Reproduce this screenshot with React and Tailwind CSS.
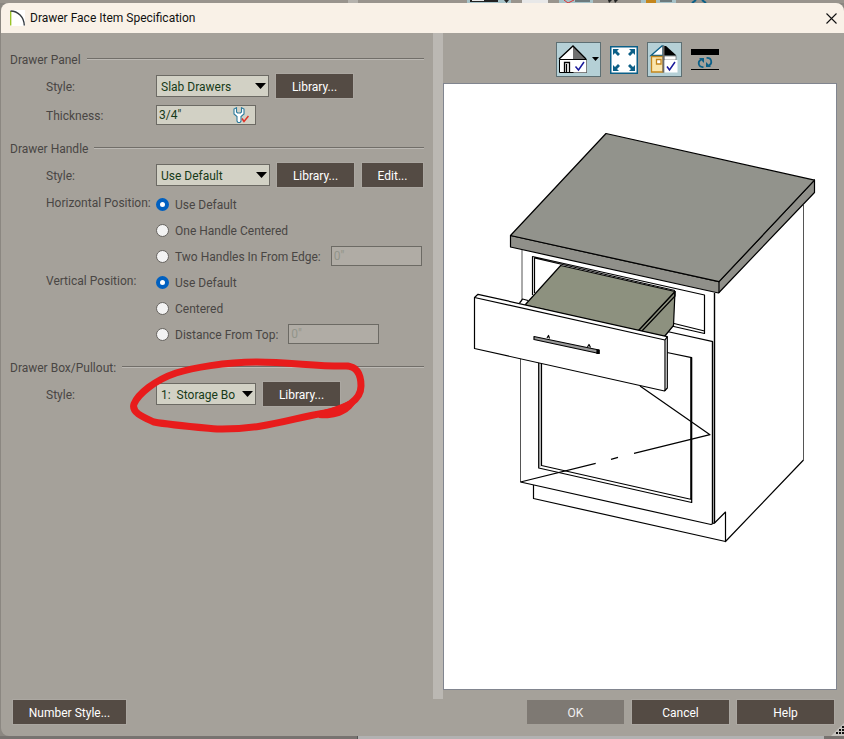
import React, { useState } from 'react';

const BUTTON = 'h-6 shrink-0 pt-px bg-[#544b44] text-white outline outline-[#aba7a1]';
const FIELD = 'h-5 border border-[#6c6a64] px-[2px]';

const Group = ({ title, className = '', children }) => (
    <section className={className}>
        <div className="flex items-center gap-[6px] h-5">
            <h2>{title}</h2>
            <div className="flex-1 h-[2px] mb-[2px] bg-[#716e69] border-b border-[#bcb9b4]"></div>
        </div>
        <div className="pl-9">{children}</div>
    </section>
);

const Select = ({ id, value, className }) => (
    <div className={`relative shrink-0 ${className}`}>
        <select
            id={id}
            defaultValue={value}
            className="block w-full h-[22px] pl-1 pr-5 pt-px appearance-none rounded-none bg-[#d2d1c5] border border-[#6c6a64] text-[#163a18]"
        >
            <option>{value}</option>
        </select>
        <svg className="absolute right-[3px] top-2 pointer-events-none" width="11" height="6" viewBox="0 0 11 6">
            <path d="M0 0H11L5.5 6Z" fill="#000" />
        </svg>
    </div>
);

const Radio = ({ name, value, label, current, onChange, children }) => (
    <div className="flex items-center h-[26px]">
        <label className="flex items-center gap-[6px] whitespace-nowrap">
            <input
                type="radio"
                name={name}
                checked={current === value}
                onChange={() => onChange(value)}
                className="appearance-none size-[13px] rounded-full bg-[#f3f3f3] border border-[#66635f] checked:bg-white checked:border-4 checked:border-[#0060c0]"
            />
            <span className="pt-px">{label}</span>
        </label>
        {children}
    </div>
);

const HouseIcon = () => (
    <svg width="43" height="33" viewBox="1 1 43 33">
        <path d="M4 17L17 4V17Z" fill="#fff" />
        <path d="M17 4L30 17H17Z" fill="#707070" />
        <path d="M3.500 17.500H30.500V30.500H3.500Z" fill="#fff" stroke="#000" />
        <path d="M3 17L17 4L30 17" fill="none" stroke="#000" strokeWidth="1.3" />
        <path d="M8.500 30V20.500H13.500V30M10.500 30V22" fill="none" stroke="#000" strokeWidth="1.3" />
        <path d="M17.500 18H30.500V30.500H17.500Z" fill="#fff" />
        <path d="M19.500 24.500L22.500 28L28 20" fill="none" stroke="#1a1a9c" strokeWidth="1.5" />
        <path d="M36 15H43L39.500 19Z" fill="#000" />
    </svg>
);

const FillWindowIcon = () => (
    <svg width="28" height="28" viewBox="0 0 28 28">
        <rect x=".75" y=".75" width="26.500" height="26.500" fill="#fff" stroke="#0b5f87" strokeWidth="1.5" />
        <g fill="#0b5f87">
            <path d="M3 3H9L7 5L10 8L8 10L5 7L3 9Z" />
            <path d="M25 3H19L21 5L18 8L20 10L23 7L25 9Z" />
            <path d="M3 25H9L7 23L10 20L8 18L5 21L3 19Z" />
            <path d="M25 25H19L21 23L18 20L20 18L23 21L25 19Z" />
        </g>
    </svg>
);

const ColorHouseIcon = () => (
    <svg width="33" height="33" viewBox="1 1 33 33">
        <path d="M4 13.500L15 4H16V13.500Z" fill="#fff" stroke="#0b5f87" strokeWidth="1.3" />
        <path d="M17 4H19L29.500 13.500H17Z" fill="#000" />
        <path d="M17 14H29V18H17Z" fill="#fff" stroke="#333" strokeWidth=".5" />
        <path d="M4.500 14.500H16V30H4.500Z" fill="#fbe6ad" stroke="#c4861d" strokeWidth="1.3" />
        <path d="M9.500 17.500H14V22H9.500Z" fill="#fff" stroke="#c4861d" strokeWidth="1.3" />
        <path d="M15.500 3.500H17.500V30.500H15.500Z" fill="#6c6c6c" />
        <path d="M17.500 18H30.500V30.500H17.500Z" fill="#fff" />
        <path d="M20 24.500L22.500 28L28 20" fill="none" stroke="#1a1a9c" strokeWidth="1.5" />
    </svg>
);

const RotateIcon = () => (
    <svg width="28" height="22" viewBox="0 0 28 22">
        <path d="M0 0H28V6H0Z" fill="#000" />
        <path d="M0 20H28V21H0Z" fill="#000" />
        <path d="M12.500 18C7.500 18.500 6 13 10 10.500M15.500 9C20.500 8.500 22 14 18 16.500" fill="none" stroke="#0b5f87" strokeWidth="1.7" />
        <path d="M8 9H13V14Z" fill="#0b5f87" />
        <path d="M15 13V18H20Z" fill="#0b5f87" />
    </svg>
);

const WrenchIcon = () => (
    <svg width="16" height="16" viewBox="0 0 16 16">
        <path
            d="M3.500 .7L1 2V7L4 9.500V14L5 15.500H7L8 14V9.500L11 7V2L8.500 .7V5L7.500 6H4.500L3.500 5Z"
            fill="#fff" stroke="#2b7a9d" strokeWidth="1.1"
        />
        <path d="M9 11.500L11 14.500L15.500 9" fill="none" stroke="#e03127" strokeWidth="1.5" />
    </svg>
);

const Cabinet = () => (
    <svg className="w-full h-full" viewBox="444 84 392 605" fill="none" stroke="#000" strokeWidth="1.2" strokeLinejoin="round">
        {/* Carcass */}
        <path d="M803.500 460L725.500 541.500V512L714 523.500" />
        <path d="M803.500 205V460M522 250V300M520.500 358V482" stroke="#555" strokeWidth="1" />
        <path d="M725.500 541.500L533.500 498.500V485" />
        <path d="M520.500 482L711 524.500L714 523" />
        <path d="M714.500 293V523M712.500 341.500V523.500" strokeWidth="1.4" />

        {/* Drawer opening */}
        <path d="M532.500 295V256.500L704.500 295V333.500L665 324.500M534.500 293V258L675 290.500M670 322.500L704.500 331" />
        <path d="M665 331L713 341.700" />
        <path d="M521 301L522.500 299L528 300.500M519.500 303L522 300" />

        {/* Door panel */}
        <path d="M539 362H541.500V466L539 468Z" fill="#ccc" stroke="none" />
        <path d="M538.700 362V468L691.700 502.500V357.700L667 352.500M541.500 362V465.500L691.700 499.500M690.800 358V499" />
        <path d="M640 386L710 434.700L634 453.300M618 457.300L611 459.300M595.700 463.300L520.500 482" />

        {/* Drawer box */}
        <path d="M675 291.500L673.500 325.500L664 337L638 331Z" fill="#8d917f" />
        <path d="M560.700 265.500L675 291.500L638 331L525 305Z" fill="#8d917f" />
        <path d="M675 291.500V296L641 332" />

        {/* Drawer front */}
        <path d="M474.500 297.500L478 294.300L667.300 336.700V388L664.500 391L474.500 348.500Z" fill="#fff" />
        <path d="M474.500 297.500L665 340L667.300 336.700M665 340V391" />
        <path d="M534 336.500L599 350V353.500L534 339.500Z" fill="#999" />
        <path d="M547 338L548.500 335.500L549.500 338.500M587.500 347L589 344.500L590.500 347.500" />
        <path d="M597 350V353.500H599V350Z" fill="#000" />

        {/* Countertop */}
        <path d="M510.500 235.500L719 281.700L814.500 180V192.500L718.500 293L510.500 247Z" fill="#90908a" />
        <path d="M606 133.500L814.500 180.200L719 281.700L510.500 235.500Z" fill="#92938c" />
        <path d="M719 281.700V293" />
    </svg>
);

const Markup = () => (
    <svg className="absolute left-[120px] -top-2 pointer-events-none" width="246" height="85" viewBox="130 350 246 85">
        <path
            d="M348 366C320 367 290 362 257 362C225 362 192 368 176 373C155 380 138 394 134 404C131 413 145 418 154 422C170 425 195 427 217 429C265 430 295 417 325 413C346 409 361 400 361 386C361 373 356 366 346 366"
            fill="none" stroke="#e81c1c" strokeWidth="7" strokeLinecap="round" strokeLinejoin="round"
        />
        <path d="M315 412C335 408 352 400 358 396C355 410 341 420 319 418Z" fill="#e81c1c" />
    </svg>
);

export default function App() {
    const [horizontal, setHorizontal] = useState('default');
    const [vertical, setVertical] = useState('default');

    return (
        <div className="min-h-screen flex flex-col bg-[#8b8781] font-['Roboto','Open_Sans',sans-serif] text-xs text-[#494644]">
            {/* Application toolbar peeking out above the dialog */}
            <svg className="block w-full h-[3px]" viewBox="0 0 844 3" preserveAspectRatio="none">
                <path d="M0 0H844V3H0Z" fill="#99948d" />
                <path d="M348 0H358V3H348Z" fill="#b5b2ad" />
                <path d="M467 0H511V3H467ZM559 0H593V3H559ZM641 0H676V3H641Z" fill="#a7c2c8" />
                <path d="M470 0H498V2H470ZM504 0H509L506.500 3ZM608 0H612L609 3ZM614 0H618L615 3Z" fill="#222" />
                <path d="M472 0H484V1H472ZM522 0H548V3H522Z" fill="#e8e8e8" />
                <path d="M564 0L568 3L574 0" stroke="#d33" fill="none" />
                <path d="M575 1H590M660 1H672" stroke="#333" />
                <path d="M646 0H656V3H646Z" fill="#c4861d" />
                <path d="M692 3L696 0M702 0L706 3" stroke="#0b5f87" strokeWidth="2" />
            </svg>

            <main className="relative flex-1 flex flex-col ml-px bg-[#a5a19a] rounded-t-lg rounded-bl-lg overflow-hidden">
                <header className="flex items-center h-[30px] pl-[9px] pr-[7px] bg-[#f9f1e7] text-[#111]">
                    <svg width="16" height="16" viewBox="0 0 16 16">
                        <path d="M0 0H15V16H0Z" fill="#fff" />
                        <path d="M.7 1V15.500" stroke="#95c11f" strokeWidth="1.3" />
                        <path d="M.5 1C8 1 14 7 14.300 15.500" fill="none" stroke="#333a40" strokeWidth="1.4" />
                    </svg>
                    <h1 className="flex-1 ml-1">Drawer Face Item Specification</h1>
                    <button type="button" aria-label="Close">
                        <svg width="11" height="11" viewBox="0 0 11 11">
                            <path d="M.5 .5L10.500 10.500M10.500 .5L.5 10.500" stroke="#111" strokeWidth="1.1" />
                        </svg>
                    </button>
                </header>

                <div className="flex-1 flex">
                    <div className="w-[432px] shrink-0 pl-[9px] pr-[9px] pt-[17px]">
                        <Group title="Drawer Panel">
                            <div className="flex items-center mt-1">
                                <label htmlFor="panel-style" className="w-[110px] pt-px">Style:</label>
                                <Select id="panel-style" value="Slab Drawers" className="w-[113px] mr-[7px]" />
                                <button type="button" className={`${BUTTON} w-[77px]`}>Library...</button>
                            </div>
                            <div className="flex items-center mt-[7px]">
                                <label htmlFor="thickness" className="w-[110px] pt-px">Thickness:</label>
                                <div className="relative">
                                    <input id="thickness" defaultValue={'3/4"'} className={`${FIELD} block w-[100px] bg-[#d2d1c5] text-[#163a18]`} />
                                    <span className="absolute right-[7px] top-[2px]"><WrenchIcon /></span>
                                </div>
                            </div>
                        </Group>

                        <Group title="Drawer Handle" className="mt-[14px]">
                            <div className="flex items-center mt-1">
                                <label htmlFor="handle-style" className="w-[110px] pt-px">Style:</label>
                                <Select id="handle-style" value="Use Default" className="w-[114px] mr-[7px]" />
                                <button type="button" className={`${BUTTON} w-[77px] mr-2`}>Library...</button>
                                <button type="button" className={`${BUTTON} w-[61px]`}>Edit...</button>
                            </div>
                            <div role="radiogroup" aria-labelledby="horizontal" className="flex mt-1">
                                <div id="horizontal" className="w-[110px] leading-6 whitespace-nowrap">Horizontal Position:</div>
                                <div>
                                    <Radio name="horizontal" value="default" label="Use Default" current={horizontal} onChange={setHorizontal} />
                                    <Radio name="horizontal" value="centered" label="One Handle Centered" current={horizontal} onChange={setHorizontal} />
                                    <Radio name="horizontal" value="two" label="Two Handles In From Edge:" current={horizontal} onChange={setHorizontal}>
                                        <input disabled aria-label="Distance from edge" defaultValue={'0"'} className={`${FIELD} w-[91px] ml-[10px] bg-[#b0aca5] text-[#92958a]`} />
                                    </Radio>
                                </div>
                            </div>
                            <div role="radiogroup" aria-labelledby="vertical" className="flex">
                                <div id="vertical" className="w-[110px] leading-6 whitespace-nowrap">Vertical Position:</div>
                                <div>
                                    <Radio name="vertical" value="default" label="Use Default" current={vertical} onChange={setVertical} />
                                    <Radio name="vertical" value="centered" label="Centered" current={vertical} onChange={setVertical} />
                                    <Radio name="vertical" value="top" label="Distance From Top:" current={vertical} onChange={setVertical}>
                                        <input disabled aria-label="Distance from top" defaultValue={'0"'} className={`${FIELD} w-[91px] ml-[10px] bg-[#b0aca5] text-[#92958a]`} />
                                    </Radio>
                                </div>
                            </div>
                        </Group>

                        <Group title="Drawer Box/Pullout:" className="relative mt-[11px]">
                            <div className="flex items-center mt-1">
                                <label htmlFor="box-style" className="w-[110px] pt-px">Style:</label>
                                <Select id="box-style" value={'1:\u00a0 Storage Box'} className="w-[100px] mr-[7px]" />
                                <button type="button" className={`${BUTTON} w-[77px]`}>Library...</button>
                            </div>
                            <Markup />
                        </Group>
                    </div>

                    <div className="w-[10px] shrink-0 bg-[#bbb8b3]"></div>

                    <div className="flex-1 min-w-0 flex flex-col pt-[9px] pr-[7px] pb-[9px]">
                        <div className="flex items-center justify-center gap-[9px] mb-[6px] pr-[6px]">
                            <button type="button" aria-label="Camera view" className="bg-[#b5d0d6] border border-[#5d6f73]"><HouseIcon /></button>
                            <button type="button" aria-label="Fill window"><FillWindowIcon /></button>
                            <button type="button" aria-label="Color" className="bg-[#b5d0d6] border border-[#5d6f73]"><ColorHouseIcon /></button>
                            <button type="button" aria-label="Rotate"><RotateIcon /></button>
                        </div>
                        <div className="flex-1 min-h-0 bg-white border border-[#81858f]">
                            <Cabinet />
                        </div>
                    </div>
                </div>

                <footer className="flex gap-2 h-[37px] pt-px pl-3 pr-[10px]">
                    <button type="button" className={`${BUTTON} w-[113px] mr-auto`}>Number Style...</button>
                    <button type="button" className="h-6 w-[97px] pt-px bg-[#7e7973] text-[#f0f0f0]">OK</button>
                    <button type="button" className={`${BUTTON} w-[97px]`}>Cancel</button>
                    <button type="button" className={`${BUTTON} w-[97px]`}>Help</button>
                </footer>
                <svg className="absolute right-0 bottom-0" width="13" height="13" viewBox="0 0 13 13">
                    <path d="M13 0V13H0Z" fill="#c5c2bd" />
                    <path d="M11 3h2v2h-2zM8 6h2v2h-2zM11 6h2v2h-2zM5 9h2v2h-2zM8 9h2v2h-2zM11 9h2v2h-2z" fill="#111" />
                </svg>
            </main>

            <div className="flex h-[3px] bg-[#777370]">
                <div className="w-[358px] border-r border-[#555]"></div>
                <div className="flex-1 mr-5 bg-[#b2b2b2]"></div>
            </div>
        </div>
    );
}
